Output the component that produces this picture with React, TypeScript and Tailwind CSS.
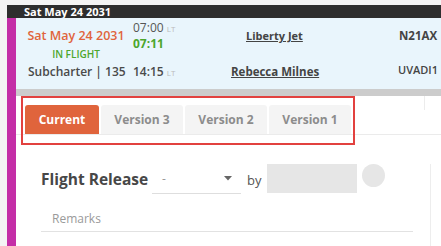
import React from "react";

const F = { fontFamily: '"Open Sans", "Liberation Sans", sans-serif' };

export default function App() {
  return (
    <div className="w-[441px] h-[246px] overflow-hidden bg-white flex relative" style={F}>
      <div className="w-[7px] bg-[#f4f4f4] shrink-0" />
      <div className="flex-1 flex flex-col min-w-0">
        <div className="h-[5px] bg-[#f4f4f4] shrink-0" />
        <div className="h-[13px] bg-[#2e2e2e] text-white font-bold text-[11px] leading-[13px] pl-[17px] shrink-0 whitespace-nowrap">
          Sat May 24 2031
        </div>
        <div className="flex flex-1 min-h-0">
          <div className="w-[9px] bg-[#c42ea7] shrink-0" />
          <div className="flex-1 flex flex-col min-w-0 relative">
            {/* flight panel */}
            <div className="h-[71px] bg-[#e9f5fc] relative shrink-0">
              <div className="absolute left-[10px] top-[9px] w-[100px] flex flex-col items-center">
                <span className="text-[12.5px] font-semibold text-[#e0643c] leading-[18px] whitespace-nowrap">Sat May 24 2031</span>
                <span className="text-[10px] font-semibold text-[#4ca62c] leading-[14px] mt-[2px] whitespace-nowrap">IN FLIGHT</span>
              </div>
              <div className="absolute left-[12px] top-[45px] text-[12px] font-semibold text-[#4a4a4a] leading-[18px] whitespace-nowrap">
                Subcharter | 135
              </div>
              <div className="absolute left-[117px] top-[2px] flex flex-col leading-[15px]">
                <span className="text-[12px] text-[#555] whitespace-nowrap">
                  07:00 <span className="text-[8px] text-[#bbb]">LT</span>
                </span>
                <span className="text-[12px] font-bold text-[#4ca62c] whitespace-nowrap">07:11</span>
              </div>
              <div className="absolute left-[117px] top-[45px] text-[12px] font-semibold text-[#4a4a4a] leading-[18px] whitespace-nowrap">
                14:15 <span className="text-[8px] font-normal text-[#bbb]">LT</span>
              </div>
              <div className="absolute left-[230px] top-[9px] text-[11px] font-bold text-[#444] underline leading-[18px] whitespace-nowrap">
                Liberty Jet
              </div>
              <div className="absolute left-[215px] top-[45px] text-[11.5px] font-bold text-[#444] underline leading-[18px] whitespace-nowrap">
                Rebecca Milnes
              </div>
              <div className="absolute left-[383px] top-[9px] text-[11.5px] font-bold text-[#444] leading-[18px]">
                N21AX
              </div>
              <div className="absolute left-[382px] top-[43px] text-[11px] font-semibold text-[#444] leading-[18px] whitespace-nowrap">
                UVADI1
              </div>
            </div>
            <div className="h-[7px] bg-[#cccccc] shrink-0" />
            {/* tabs */}
            <div className="pt-[9px] pl-[9px] border-b border-[#ebebeb] flex gap-[2px] text-[12px] font-bold relative">
              <div className="w-[74px] h-[29px] rounded-t-[3px] bg-[#e0643c] text-white flex items-center justify-center">
                Current
              </div>
              <div className="w-[82px] h-[29px] rounded-t-[3px] bg-[#f4f4f4] text-[#8c8c8c] flex items-center justify-center">
                Version 3
              </div>
              <div className="w-[82px] h-[29px] rounded-t-[3px] bg-[#f4f4f4] text-[#8c8c8c] flex items-center justify-center">
                Version 2
              </div>
              <div className="w-[82px] h-[29px] rounded-t-[3px] bg-[#f4f4f4] text-[#8c8c8c] flex items-center justify-center">
                Version 1
              </div>
              <div className="absolute left-[408px] top-0 w-px h-[14px] bg-[#ececec]" />
            </div>
            {/* flight release */}
            <div className="flex items-start pl-[25px] pt-[30px] relative">
              <span className="w-[111px] shrink-0 text-[15.5px] font-bold text-[#474747] leading-[22px] mt-[3px] whitespace-nowrap">
                Flight Release
              </span>
              <div className="w-[89px] h-[30px] border-b border-[#dedede] flex items-center justify-between pl-[10px] pr-[9px] text-[#999] text-[12px] mt-[-1px]">
                <span>-</span>
                <svg width="8" height="5" viewBox="0 0 8 5">
                  <path d="M0 0 L8 0 L4 4.5 Z" fill="#666" />
                </svg>
              </div>
              <span className="ml-[6px] text-[13px] text-[#555] mt-[6px] leading-[18px]">by</span>
              <div className="ml-[6px] w-[90px] h-[29px] bg-[#e6e6e6] mt-[-1px]" />
              <div className="ml-[5px] w-[23px] h-[23px] rounded-full bg-[#e6e6e6] mt-[-1px]" />
            </div>
            <div className="ml-[25px] w-[372px] mt-[16px] border-b border-[#e2e2e2] pl-[11px] pb-[4px] text-[12px] text-[#9a9a9a] leading-[17px]">
              Remarks
            </div>
            <div className="absolute left-[414px] top-[146px] bottom-0 w-px bg-[#ededed]" />
          </div>
        </div>
      </div>
      {/* annotation overlay */}
      <div className="absolute left-[21px] top-[96px] w-[334px] h-[49px] border-2 border-[#e2413f] pointer-events-none" />
    </div>
  );
}
